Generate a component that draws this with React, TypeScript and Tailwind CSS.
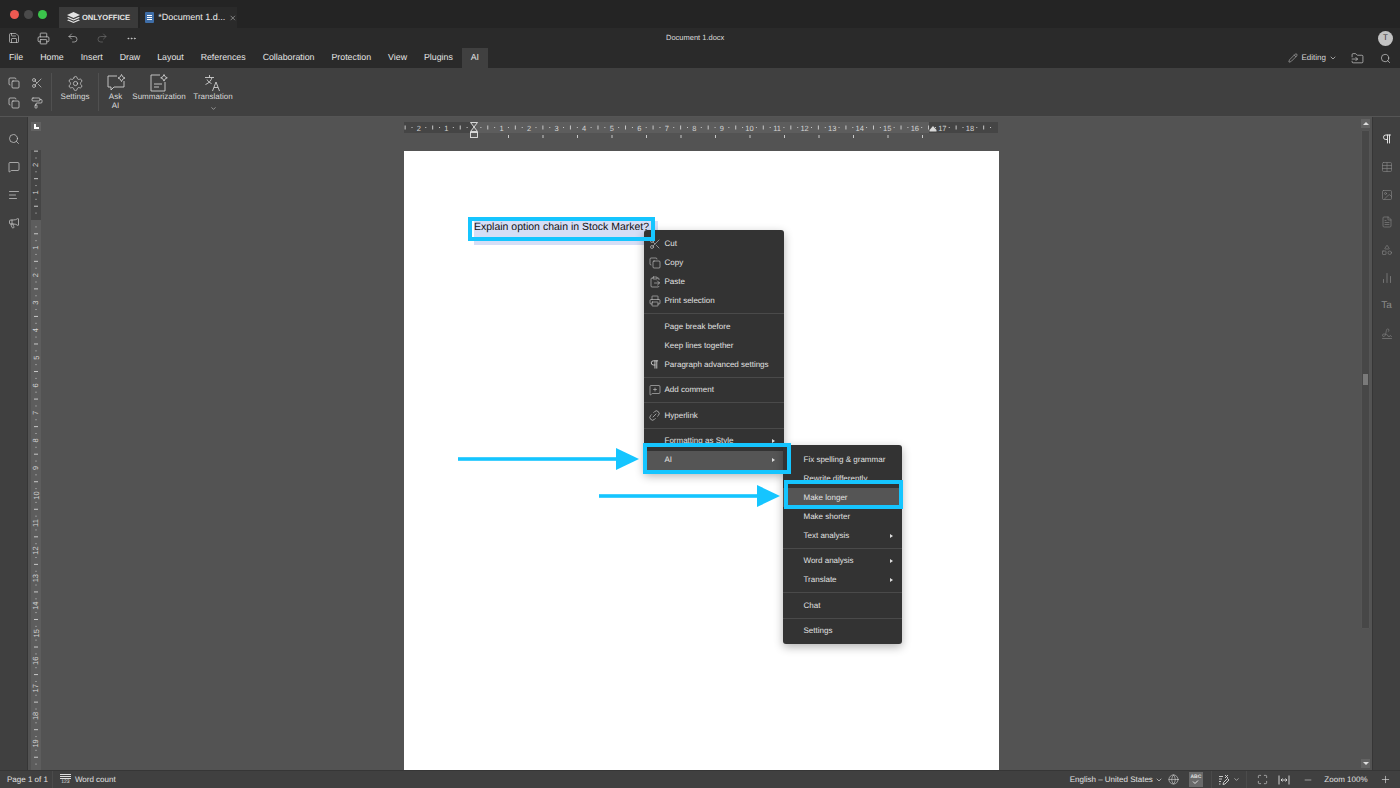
import {
  AlignLeft, ChevronDown, ClipboardPaste, Copy, FileText, Globe, Link2, Maximize, Megaphone,
  MessageSquare, MessageSquarePlus, Minus, PaintRoller, Pencil, Pilcrow, Plus, Printer, Redo2, Save, Scissors,
  Search, Settings, Undo2, X, Ellipsis, Table, Image, Shapes, ChartNoAxesColumn, Signature, FolderInput,
} from 'lucide-react';

const font = 'font-["Liberation_Sans",Arial,sans-serif] [text-rendering:geometricPrecision]';

const tabs = ['File', 'Home', 'Insert', 'Draw', 'Layout', 'References', 'Collaboration', 'Protection', 'View', 'Plugins'];
const unit = 27.55;

function HorizontalRuler() {
  const ticks = [];
  for (let i = -2.5; i <= 18.75; i += 0.25) {
    const x = 70 + i * unit;
    if (Number.isInteger(i)) continue;
    const half = Number.isInteger(i * 2);
    ticks.push(half
      ? <rect key={i} x={x - 0.5} y={3.5} width={1} height={4} fill="#c8c8c8" />
      : <rect key={i} x={x - 0.5} y={5} width={1} height={1} fill="#c8c8c8" />);
  }
  const labels = [];
  for (let i = -2; i <= 18; i++) {
    if (i === 0) continue;
    labels.push(<text key={i} x={70 + i * unit} y={8.5} textAnchor="middle" fontSize="7.5" fill="#d4d4d4" fontFamily="Liberation Sans">{Math.abs(i)}</text>);
  }
  const stops = [];
  for (let x = 104; x < 525; x += 34.5) stops.push(<rect key={x} x={x} y={13} width={1} height={3} fill="#c8c8c8" />);
  return (
    <svg width="596" height="20" className="block overflow-visible">
      <rect x="0" y="0" width="594" height="11" fill="#5d5d5d" />
      <rect x="0" y="0" width="70" height="11" fill="#454545" />
      <rect x="525" y="0" width="69" height="11" fill="#454545" />
      {ticks}
      {labels}
      {stops}
      <path d="M66.5 0.5h7l-3.5 4.5 3.5 4.5h-7l3.5-4.5z" fill="#5a5a5a" stroke="#e6e6e6" strokeWidth="0.9" />
      <rect x="66.5" y="10.5" width="7" height="5" fill="#5a5a5a" stroke="#e6e6e6" strokeWidth="0.9" />
      <path d="M525.500 8l3.500-4 3.500 4v1.500h-7z" fill="#d8d8d8" />
    </svg>
  );
}

function VerticalRuler() {
  const items = [];
  for (let i = -2.5; i <= 19.75; i += 0.25) {
    const y = 70 + i * unit;
    if (Number.isInteger(i)) {
      if (i === 0) continue;
      items.push(<text key={i} x={5} y={y} textAnchor="middle" dominantBaseline="central" fontSize="7.5" fill="#d4d4d4" fontFamily="Liberation Sans" transform={`rotate(-90 5 ${y})`}>{Math.abs(i)}</text>);
    } else if (Number.isInteger(i * 2)) {
      items.push(<rect key={i} x={3} y={y - 0.5} width={4} height={1} fill="#c8c8c8" />);
    } else {
      items.push(<rect key={i} x={4.5} y={y - 0.5} width={1} height={1} fill="#c8c8c8" />);
    }
  }
  return (
    <svg width="10" height="620" className="block">
      <rect x="0" y="0" width="10" height="620" fill="#5d5d5d" />
      <rect x="0" y="0" width="10" height="70" fill="#454545" />
      {items}
    </svg>
  );
}

function TabsRow() {
  return (
    <div className="flex h-5 items-stretch bg-[#2a2a2a] pl-[9px] pr-2 text-[8.8px] text-[#e4e4e4]">
      <div className="flex items-center gap-[17px]">
        {tabs.map((t) => <span key={t}>{t}</span>)}
      </div>
      <div className="ml-[9px] flex w-[26px] items-center justify-center bg-[#404040]">AI</div>
      <div className="ml-auto flex items-center text-[8px] text-[#d8d8d8]">
        <Pencil size={10} strokeWidth={1.2} />
        <span className="ml-[4px]">Editing</span>
        <ChevronDown size={8} className="ml-[3px]" />
        <FolderInput size={13} strokeWidth={1.2} className="ml-[14px]" />
        <Search size={11} strokeWidth={1.4} className="ml-[16px] mr-[1px]" />
      </div>
    </div>
  );
}

function ToolButton({ label, children, width }: { label: string; children: React.ReactNode; width: string }) {
  return (
    <div className={`flex flex-col items-center pt-[5px] text-center text-[8px] leading-[10px] text-[#d8d8d8] ${width}`}>
      <div className="flex h-[20px] items-center justify-center">{children}</div>
      {label.split('|').map((l) => <span key={l} className="mt-[-1px] first:mt-[6px] whitespace-nowrap">{l}</span>)}
    </div>
  );
}

function Toolbar() {
  return (
    <div className="flex h-[49px] items-stretch border-b border-[#555] bg-[#404040]">
      <div className="grid w-[51px] grid-cols-2 content-start gap-y-[8px] pl-[8px] pt-[9px] text-[#dcdcdc]">
        <Copy size={12} strokeWidth={1.4} />
        <Scissors size={12} strokeWidth={1.3} className="ml-[1px]" />
        <Copy size={12} strokeWidth={1.4} />
        <PaintRoller size={12} strokeWidth={1.4} className="ml-[1px]" />
      </div>
      <div className="my-[5px] w-px bg-[#505050]" />
      <ToolButton label="Settings" width="w-[46px]"><Settings size={17} strokeWidth={1} /></ToolButton>
      <div className="my-[5px] w-px bg-[#505050]" />
      <ToolButton label="Ask|AI" width="w-[33px]">
        <svg width="20" height="18" viewBox="0 0 20 18" fill="none" stroke="#cfcfcf" strokeWidth="0.9">
          <path d="M11 2H2v11h3v3l3-3h10V7" />
          <path d="M15.5 0.5l1.2 2.3 2.3 1.2-2.3 1.2-1.2 2.3-1.2-2.3-2.3-1.2 2.3-1.2z" />
        </svg>
      </ToolButton>
      <ToolButton label="Summarization" width="w-[54px]">
        <svg width="18" height="18" viewBox="0 0 18 18" fill="none" stroke="#cfcfcf" strokeWidth="0.9">
          <path d="M10 1H1v16h14V8" />
          <path d="M4 10h8M4 13h5" />
          <path d="M14 0.5l1.1 2.2 2.2 1.1-2.2 1.1-1.1 2.2-1.1-2.2-2.2-1.1 2.2-1.1z" />
        </svg>
      </ToolButton>
      <ToolButton label="Translation" width="w-[40px] ml-[7px]">
        <svg width="18" height="18" viewBox="0 0 18 18" fill="none" stroke="#cfcfcf" strokeWidth="0.9">
          <path d="M1 3.5h9M5.5 1v2.5M8 3.5c-.8 3-2.800 5.500-6.500 7M3 5.500c1 2 2.500 3.200 4.500 4" />
          <path d="M8.500 17l3.500-9 3.500 9M10 13.500h4" />
        </svg>
      </ToolButton>
      <ChevronDown size={7} className="absolute left-[209.500px] top-[105px] text-[#cfcfcf]" />
    </div>
  );
}

function LeftBar() {
  return (
    <div className="flex w-[28px] shrink-0 flex-col items-center gap-[16px] border-r border-[#363636] bg-[#404040] pt-[16px] text-[#d2d2d2]">
      <Search size={12} strokeWidth={1.4} />
      <MessageSquare size={12} strokeWidth={1.4} />
      <AlignLeft size={12} strokeWidth={1.4} />
      <Megaphone size={12} strokeWidth={1.4} />
    </div>
  );
}

function RightBar() {
  return (
    <div className="flex w-[28px] shrink-0 flex-col items-center gap-[15.800px] border-l border-[#363636] bg-[#404040] pt-[16px] text-[#8a8a8a]">
      <Pilcrow size={12} strokeWidth={2} className="text-[#e0e0e0]" />
      <Table size={12} strokeWidth={1.2} />
      <Image size={12} strokeWidth={1.2} />
      <FileText size={12} strokeWidth={1.2} />
      <Shapes size={12} strokeWidth={1.2} />
      <ChartNoAxesColumn size={12} strokeWidth={1.4} />
      <span className="flex h-3 items-center text-[10px] leading-none">Ta</span>
      <Signature size={12} strokeWidth={1.2} />
    </div>
  );
}

function Scrollbar() {
  return (
    <div className="flex w-[9px] shrink-0 flex-col">
      <div className="mt-[2px] flex h-[9px] items-center justify-center bg-[#636363]">
        <span className="h-0 w-0 border-x-[3px] border-b-[3px] border-x-transparent border-b-[#ddd]" />
      </div>
      <div className="relative mt-[2px] h-[499px] rounded-[1px] border border-[#555] bg-[#474747]">
        <div className="absolute left-[1px] top-[243px] h-[11px] w-[5px] bg-[#7a7a7a]" />
      </div>
      <div className="mt-auto mb-[2px] flex h-[9px] items-center justify-center bg-[#636363]">
        <span className="h-0 w-0 border-x-[3px] border-t-[3px] border-x-transparent border-t-[#ddd]" />
      </div>
    </div>
  );
}

type Row = { label?: string; icon?: React.ReactNode; arrow?: boolean; active?: boolean; sep?: boolean };

const mainMenu: Row[] = [
  { label: 'Cut', icon: <Scissors size={12} strokeWidth={1.2} /> },
  { label: 'Copy', icon: <Copy size={12} strokeWidth={1.2} /> },
  { label: 'Paste', icon: <ClipboardPaste size={12} strokeWidth={1.2} /> },
  { label: 'Print selection', icon: <Printer size={12} strokeWidth={1.2} /> },
  { sep: true },
  { label: 'Page break before' },
  { label: 'Keep lines together' },
  { label: 'Paragraph advanced settings', icon: <Pilcrow size={11} strokeWidth={2} /> },
  { sep: true },
  { label: 'Add comment', icon: <MessageSquarePlus size={12} strokeWidth={1.2} /> },
  { sep: true },
  { label: 'Hyperlink', icon: <Link2 size={13} strokeWidth={1.2} className="-rotate-45" /> },
  { sep: true },
  { label: 'Formatting as Style', arrow: true },
  { label: 'AI', arrow: true, active: true },
];

const aiMenu: Row[] = [
  { label: 'Fix spelling & grammar' },
  { label: 'Rewrite differently' },
  { label: 'Make longer', active: true },
  { label: 'Make shorter' },
  { label: 'Text analysis', arrow: true },
  { sep: true },
  { label: 'Word analysis', arrow: true },
  { label: 'Translate', arrow: true },
  { sep: true },
  { label: 'Chat' },
  { sep: true },
  { label: 'Settings' },
];

function Menu({ rows, className }: { rows: Row[]; className: string }) {
  return (
    <div className={`absolute rounded-[3px] bg-[#333] pb-[3px] pt-[5px] text-[8px] text-[#e2e2e2] shadow-[0_3px_10px_rgba(0,0,0,0.3)] ${className}`}>
      {rows.map((r, i) =>
        r.sep ? (
          <div key={i} className="flex h-[6.500px] items-center"><div className="h-px w-full bg-[#4a4a4a]" /></div>
        ) : (
          <div key={i} className={`flex h-[19px] items-center ${r.active ? 'bg-[#555]' : ''}`}>
            <span className="flex w-[21px] shrink-0 justify-center pl-[1px] text-[#cfcfcf]">{r.icon}</span>
            <span className="whitespace-nowrap">{r.label}</span>
            {r.arrow && <span className="ml-auto mr-[9px] h-0 w-0 border-y-[2.500px] border-l-[3px] border-y-transparent border-l-[#ddd]" />}
          </div>
        ),
      )}
    </div>
  );
}

function Arrow({ className, width }: { className: string; width: number }) {
  return (
    <svg width={width} height="22" viewBox={`0 0 ${width} 22`} className={`absolute ${className}`}>
      <rect x="0" y="9.200" width={width - 22} height="3.600" fill="#15c5ff" />
      <path d={`M${width - 23} 0L${width} 11L${width - 23} 22z`} fill="#15c5ff" />
    </svg>
  );
}

function StatusBar() {
  return (
    <div className="flex h-[18px] items-center border-t border-[#363636] bg-[#404040] text-[8px] text-[#e0e0e0]">
      <span className="ml-[7px]">Page 1 of 1</span>
      <div className="ml-[4px] h-full w-px bg-[#4b4b4b]" />
      <span className="ml-[7px] flex w-[11px] flex-col gap-[1px]">
        <span className="h-px bg-[#ddd]" /><span className="h-px bg-[#ddd]" /><span className="h-px bg-[#ddd]" />
        <span className="text-center text-[5px] leading-[5px]">123</span>
      </span>
      <span className="ml-[4px]">Word count</span>
      <div className="ml-auto flex h-full items-center">
        <span>English – United States</span>
        <ChevronDown size={8} className="ml-[2px]" />
        <Globe size={11} strokeWidth={1.2} className="ml-[5.500px]" />
        <span className="ml-[9.500px] flex h-[15px] w-[14px] flex-col items-center justify-center bg-[#6a6a6a] text-[5px] font-bold leading-none">
          ABC
          <svg width="7" height="4" viewBox="0 0 7 4" fill="none" stroke="#e0e0e0" strokeWidth="1"><path d="M1 1.500l2 2 3-3" /></svg>
        </span>
        <div className="ml-[8px] h-full w-px bg-[#4b4b4b]" />
        <svg width="12" height="12" viewBox="0 0 12 12" fill="none" stroke="#d8d8d8" strokeWidth="0.9" className="ml-[6.500px]">
          <path d="M1 2.500h4M1 5h3M1 7.500h2M1 10h1.500" /><path d="M7 1l3 3M10 1L7 4" /><path d="M5 10.500l.5-2 4-4 1.500 1.500-4 4z" />
        </svg>
        <ChevronDown size={7} className="ml-[2.500px]" />
        <div className="ml-[6.500px] h-full w-px bg-[#4b4b4b]" />
        <Maximize size={11} strokeWidth={1.3} className="ml-[9.500px]" />
        <svg width="12" height="10" viewBox="0 0 12 10" fill="none" stroke="#e0e0e0" strokeWidth="0.9" className="ml-[10.500px]">
          <path d="M1 .5v9M11 .5v9M3 5h6M4.500 3.500L3 5l1.500 1.500M7.500 3.500L9 5 7.500 6.500" />
        </svg>
        <Minus size={10} strokeWidth={1.4} className="ml-[13px]" />
        <span className="ml-[11px]">Zoom 100%</span>
        <Plus size={11} strokeWidth={1.4} className="ml-[12.500px] mr-[9px]" />
      </div>
    </div>
  );
}

export default function App() {
  return (
    <div className={`relative flex h-[788px] w-[1400px] flex-col overflow-hidden bg-[#535353] ${font}`}>
      {/* Title bar */}
      <div className="flex h-7 items-end bg-[#242424]">
        <div className="mb-[9px] ml-[10px] flex gap-[5px]">
          <span className="h-[9px] w-[9px] rounded-full bg-[#ee5a52]" />
          <span className="h-[9px] w-[9px] rounded-full bg-[#4a4a4a]" />
          <span className="h-[9px] w-[9px] rounded-full bg-[#3bc44b]" />
        </div>
        <div className="ml-[12px] flex h-[21px] w-[79px] items-center justify-center gap-[2px] bg-[#3a3a3a] text-[7.600px] font-bold text-[#e6e6e6]">
          <svg width="13" height="11" viewBox="0 0 13 11" fill="#e2e2e2">
            <path d="M6.500 0L13 3 6.500 6 0 3z" /><path d="M1.500 5L6.500 7.300 11.500 5 13 5.700 6.500 8.500 0 5.700z" /><path d="M1.500 7.500L6.500 9.800 11.500 7.500 13 8.200 6.500 11 0 8.200z" />
          </svg>
          ONLYOFFICE
        </div>
        <div className="ml-[2px] flex h-[21px] w-[97px] items-center bg-[#2a2a2a] pl-[5px] text-[9px] text-[#ececec]">
          <span className="flex h-[11px] w-[11px] flex-col justify-center gap-[1px] rounded-[1px] bg-[#3f6ea8] px-[2px]">
            <span className="h-px bg-white" /><span className="h-px bg-white" /><span className="h-px bg-white" />
          </span>
          <span className="ml-[4px] whitespace-nowrap">*Document 1.d...</span>
          <X size={10} strokeWidth={1.4} className="ml-[4px]" />
        </div>
      </div>

      {/* Quick access */}
      <div className="relative flex h-5 items-center bg-[#2a2a2a] pl-[8px] text-[#d8d8d8]">
        <Save size={12} strokeWidth={1.3} />
        <Printer size={13} strokeWidth={1.3} className="ml-[17px]" />
        <Undo2 size={12} strokeWidth={1.2} className="ml-[17px]" />
        <Redo2 size={12} strokeWidth={1.2} className="ml-[17px] text-[#777]" />
        <Ellipsis size={11} strokeWidth={1.6} className="ml-[18px]" />
        <span className="ml-[529px] text-[7.500px] text-[#dcdcdc]">Document 1.docx</span>
        <span className="ml-auto mr-[7px] flex h-[15px] w-[15px] items-center justify-center rounded-full bg-[#c2c2c2] text-[8px] text-[#333]">T</span>
      </div>

      <TabsRow />
      <Toolbar />

      {/* Work area */}
      <div className="flex min-h-0 flex-1">
        <LeftBar />
        <div className="flex min-w-0 flex-1">
          <div className="flex w-[14px] shrink-0 flex-col pl-[3px] pt-[5px]">
            <div className="flex h-[10px] w-[10px] items-center justify-center bg-[#626262]">
              <span className="h-[5px] w-[5px] border-b-2 border-l-2 border-white" />
            </div>
            <div className="mt-[19px]"><VerticalRuler /></div>
          </div>
          <div className="flex min-w-0 flex-1 flex-col pl-[362px] pt-[5px]">
            <HorizontalRuler />
            <div className="mt-[9px] h-[619px] w-[595px] bg-white pl-[70px] pt-[64px]">
              <p className="relative whitespace-nowrap text-[10.500px] leading-[24px] text-[#111]">
                <span className="absolute left-0 top-[6px] h-[24px] w-[184px] bg-[#d6def6]" />
                <span className="relative">Explain option chain in Stock Market?</span>
              </p>
            </div>
          </div>
          <Scrollbar />
          <div className="w-[2px] shrink-0" />
        </div>
        <RightBar />
      </div>

      <StatusBar />

      {/* Overlays */}
      <Menu rows={mainMenu} className="left-[643.500px] top-[229.500px] w-[140px]" />
      <Menu rows={aiMenu} className="left-[782.500px] top-[445px] w-[119px]" />
      <div className="absolute left-[468px] top-[217px] h-[24px] w-[187px] border-[4px] border-[#15c5ff]" />
      <div className="absolute left-[643px] top-[443px] h-[31px] w-[148px] border-[4px] border-[#15c5ff]" />
      <div className="absolute left-[784px] top-[480px] h-[29px] w-[119px] border-[4px] border-[#15c5ff]" />
      <Arrow className="left-[458px] top-[448px]" width={181} />
      <Arrow className="left-[599px] top-[485px]" width={181} />
    </div>
  );
}
